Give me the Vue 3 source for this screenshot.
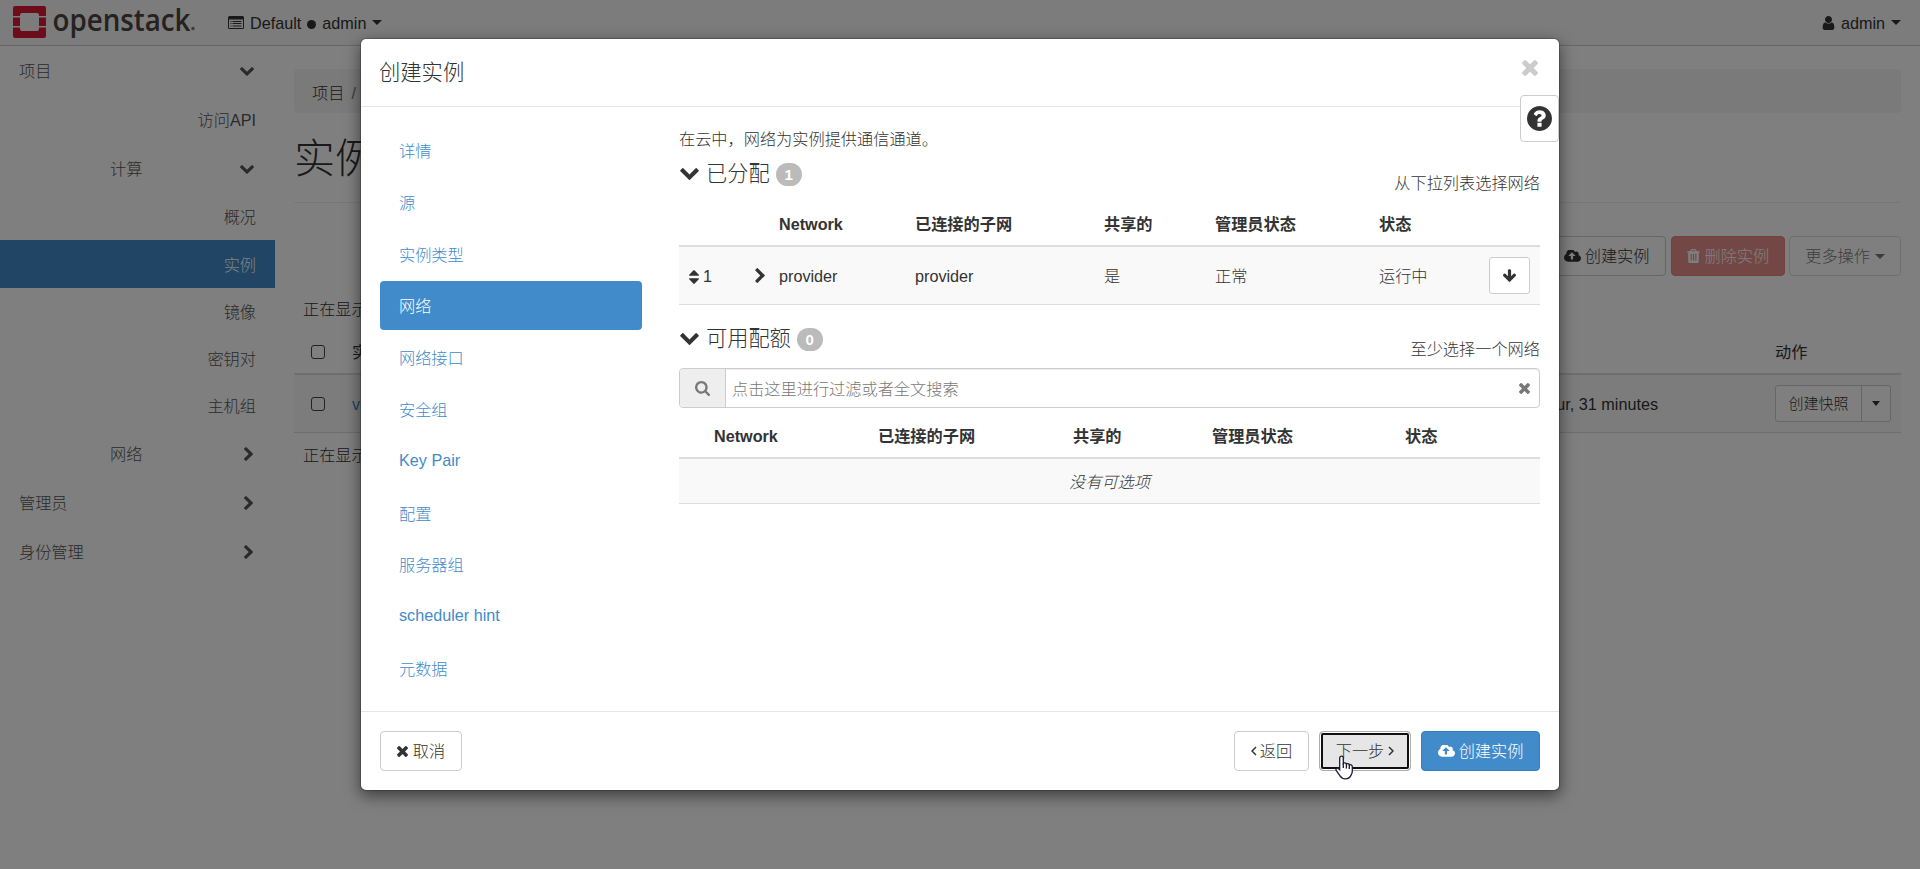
<template>
  <div class="page">
    <header class="navbar">
      <svg class="logo" viewBox="0 0 190 34">
        <g fill="#da1a32">
          <path d="M2 0h29a2 2 0 0 1 2 2v8h-7V9a2 2 0 0 0-2-2H9a2 2 0 0 0-2 2v1H0V2a2 2 0 0 1 2-2z" />
          <path d="M0 21.500h7V23a2 2 0 0 0 2 2h15a2 2 0 0 0 2-2v-1.500h7V30a2 2 0 0 1-2 2H2a2 2 0 0 1-2-2z" />
          <path d="M0 11.500h7v8.500H0zM26 11.500h7v8.500h-7z" />
        </g>
        <text x="39.500" y="24.800" textLength="138" lengthAdjust="spacingAndGlyphs">openstack</text>
        <circle cx="180" cy="22.500" r="1.700" />
      </svg>
      <div class="context">
        <svg class="list-alt" viewBox="0 0 16 13">
          <path fill-rule="evenodd" d="M1.500 0h13A1.500 1.500 0 0 1 16 1.500v10a1.500 1.500 0 0 1-1.500 1.500h-13A1.500 1.500 0 0 1 0 11.500v-10A1.500 1.500 0 0 1 1.500 0zM1 3.500V12h14V3.500z" />
          <path d="M2.500 5h1v1h-1zM2.500 7h1v1h-1zM2.500 9.500h1v1h-1zM4.500 5h9v1h-9zM4.500 7h9v1h-9zM4.500 9.500h9v1h-9z" />
        </svg>
        <span>Default</span>
        <i class="dot"></i>
        <span>admin</span>
        <i class="caret"></i>
      </div>
      <div class="user">
        <Icon name="user" class="ic-user" />
        <span>admin</span>
        <i class="caret"></i>
      </div>
    </header>

    <div class="body">
      <nav class="sidebar">
        <div v-for="item in menu" :key="item.text" class="side-item" :class="[item.kind, { active: item.active }]">
          <span>{{ item.text }}</span>
          <Icon v-if="item.icon" :name="item.icon" :class="item.icon" />
        </div>
      </nav>

      <main class="content">
        <div class="breadcrumb"><span>项目</span><em>/</em><span>计算</span><em>/</em><span>实例</span></div>
        <h1>实例</h1>
        <div class="toolbar">
          <button class="btn"><Icon name="cloud" class="ic-cloud" />创建实例</button>
          <button class="btn danger"><Icon name="trash" class="ic-trash" />删除实例</button>
          <button class="btn faded">更多操作<i class="caret"></i></button>
        </div>
        <p class="count">正在显示 1 项</p>
        <div class="grid head">
          <i class="checkbox"></i>
          <b>实例名称</b>
          <b class="age"></b>
          <b>动作</b>
        </div>
        <div class="grid row">
          <i class="checkbox"></i>
          <a>vm1</a>
          <span class="age">1 hour, 31 minutes</span>
          <div class="split"><button>创建快照</button><button><i class="caret"></i></button></div>
        </div>
        <p class="count bottom">正在显示 1 项</p>
      </main>
    </div>

    <div class="backdrop"></div>

    <div class="modal">
      <div class="modal-header">
        <h3>创建实例</h3>
        <Icon name="times" class="close" />
      </div>
      <button class="help"><Icon name="question" class="ic-question" /></button>

      <div class="modal-body">
        <ul class="steps">
          <li v-for="step in steps" :key="step" :class="{ active: step === current, latin: /^[a-z]/i.test(step) }">{{ step }}</li>
        </ul>

        <section class="panel">
          <p class="intro">在云中，网络为实例提供通信通道。</p>

          <div class="section-title">
            <Icon name="down" class="ic-down" />
            <span class="name">已分配</span>
            <span class="badge">1</span>
            <span class="hint">从下拉列表选择网络</span>
          </div>
          <table class="allocated">
            <colgroup>
              <col v-for="(w, i) in allocatedCols" :key="i" :width="w">
            </colgroup>
            <thead>
              <tr>
                <th></th>
                <th></th>
                <th v-for="h in headers" :key="h">{{ h }}</th>
                <th></th>
              </tr>
            </thead>
            <tbody>
              <tr>
                <td><Icon name="sort" class="ic-sort" />1</td>
                <td><Icon name="right" class="ic-right" /></td>
                <td>provider</td>
                <td>provider</td>
                <td>是</td>
                <td>正常</td>
                <td>运行中</td>
                <td class="action"><button class="btn small"><Icon name="arrow" class="ic-arrow" /></button></td>
              </tr>
            </tbody>
          </table>

          <div class="section-title second">
            <Icon name="down" class="ic-down" />
            <span class="name">可用配额</span>
            <span class="badge">0</span>
            <span class="hint">至少选择一个网络</span>
          </div>
          <div class="search">
            <span class="addon"><Icon name="search" class="ic-search" /></span>
            <span class="placeholder">点击这里进行过滤或者全文搜索</span>
            <Icon name="times" class="clear" />
          </div>
          <table class="available">
            <colgroup>
              <col v-for="(w, i) in availableCols" :key="i" :width="w">
            </colgroup>
            <thead>
              <tr>
                <th></th>
                <th v-for="h in headers" :key="h">{{ h }}</th>
              </tr>
            </thead>
            <tbody>
              <tr>
                <td colspan="6" class="empty">没有可选项</td>
              </tr>
            </tbody>
          </table>
        </section>
      </div>

      <div class="modal-footer">
        <button class="btn cancel"><Icon name="times" class="ic-times" />取消</button>
        <button class="btn back">
          <svg class="angle" viewBox="0 0 6 10"><path d="M5 1L1 5l4 4" /></svg>返回
        </button>
        <button class="btn next">
          下一步<svg class="angle" viewBox="0 0 6 10"><path d="M1 1l4 4-4 4" /></svg>
        </button>
        <button class="btn primary"><Icon name="cloud" class="ic-cloud" />创建实例</button>
      </div>
    </div>

    <svg class="pointer" viewBox="0 0 20 25">
      <path d="M6.500 1.200c1.100 0 1.800.8 1.800 1.800v5.200c.4-.5 2.700-.6 3.100.8.700-.6 2.600-.4 2.900.9.900-.5 3-.2 3 1.800v4.600c0 1.900-.9 3.200-1.500 4.300-.9 1.900-2.700 3.200-5.300 3.200-2.700 0-4.200-1-5.500-3L1.200 15.400c-.8-1.400.9-2.900 2.200-1.900l1.300 1.200V3c0-1 .8-1.800 1.800-1.800z" />
      <path d="M8.300 8v5M11.400 9v4.500M14.300 10v4" />
    </svg>
  </div>
</template>

<script setup>
import { h } from 'vue'

// name: [viewBox, path]
const icons = {
  down: ['90 533 1612 1035', 'M1683 808l-742 741q-19 19-45 19t-45-19l-742-741q-19-19-19-45.5t19-45.5l166-165q19-19 45-19t45 19l531 531 531-531q19-19 45-19t45 19l166 165q19 19 19 45.5t-19 45.5z'],
  right: ['346 26 1036 1612', 'M1363 877l-742 742q-19 19-45 19t-45-19l-166-166q-19-19-19-45t19-45l531-531-531-531q-19-19-19-45t19-45l166-166q19-19 45-19t45 19l742 742q19 19 19 45t-19 45z'],
  times: ['302 366 1188 1188', 'M1490 1322q0 40-28 68l-136 136q-28 28-68 28t-68-28l-294-294-294 294q-28 28-68 28t-68-28l-136-136q-28-28-28-68t28-68l294-294-294-294q-28-28-28-68t28-68l136-136q28-28 68-28t68 28l294 294 294-294q28-28 68-28t68 28l136 136q28 28 28 68t-28 68l-294 294 294 294q28 28 28 68z'],
  question: ['128 128 1536 1536', 'M1024 1376v-192q0-14-9-23t-23-9h-192q-14 0-23 9t-9 23v192q0 14 9 23t23 9h192q14 0 23-9t9-23zm256-672q0-88-55.5-163t-138.500-116-170-41q-243 0-371 213-15 24 8 42l132 100q7 6 19 6 16 0 25-12 53-68 86-92 34-24 86-24 48 0 85.500 26t37.500 59q0 38-20 61t-68 45q-63 28-115.500 86.500t-52.500 125.500v36q0 14 9 23t23 9h192q14 0 23-9t9-23q0-19 21.500-49.500t54.500-49.500q32-18 49-28.500t46-35 44.500-48 28-60.500 12.500-81zm384 192q0 209-103 385.500t-279.500 279.500-385.500 103-385.500-103-279.500-279.500-103-385.500 103-385.500 279.500-279.500 385.500-103 385.500 103 279.500 279.500 103 385.500z'],
  search: ['64 128 1664 1664', 'M1216 832q0-185-131.500-316.500t-316.500-131.500-316.500 131.500-131.500 316.500 131.500 316.500 316.500 131.500 316.500-131.500 131.500-316.500zm512 832q0 52-38 90t-90 38q-54 0-90-38l-343-342q-179 124-399 124-143 0-273.500-55.500t-225-150-150-225-55.500-273.500 55.500-273.500 150-225 225-150 273.500-55.500 273.500 55.500 225 150 150 225 55.500 273.500q0 220-124 399l343 343q37 37 37 90z'],
  cloud: ['0 256 1920 1280', 'M1280 864q0-14-9-23l-352-352q-9-9-23-9t-23 9l-351 351q-10 12-10 24 0 14 9 23t23 9h224v352q0 13 9.500 22.500t22.500 9.500h192q13 0 22.500-9.500t9.500-22.500v-352h224q13 0 22.500-9.500t9.500-22.500zm640 288q0 159-112.500 271.500t-271.500 112.500h-1088q-185 0-316.500-131.500t-131.500-316.500q0-130 70-240t188-165q-2-30-2-43 0-212 150-362t362-150q156 0 285.500 87t188.500 231q71-62 166-62 106 0 181 75t75 181q0 76-41 138 130 31 213.500 135.500t83.500 238.500z'],
  user: ['256 128 1280 1536', 'M1536 1399q0 109-62.500 187t-150.500 78h-854q-88 0-150.500-78t-62.500-187q0-85 8.500-160.500t31.500-152 58.500-131 94-89 134.500-34.500q131 128 313 128t313-128q76 0 134.500 34.500t94 89 58.500 131 31.500 152 8.500 160.500zm-256-887q0 159-112.500 271.500t-271.500 112.500-271.500-112.500-112.500-271.500 112.500-271.500 271.500-112.500 271.500 112.500 112.500 271.500z'],
  arrow: ['117 128 1558 1483', 'M1675 832q0 53-37 90l-651 652q-39 37-91 37-53 0-90-37l-651-652q-38-36-38-90 0-53 38-91l74-75q39-37 91-37 53 0 90 37l294 294v-704q0-52 38-90t90-38h128q52 0 90 38t38 90v704l294-294q37-37 90-37 52 0 91 37l75 75q37 39 37 91z'],
  sort: ['384 192 1024 1408', 'M1408 1088q0 26-19 45l-448 448q-19 19-45 19t-45-19l-448-448q-19-19-19-45t19-45 45-19h896q26 0 45 19t19 45zm0-384q0 26-19 45t-45 19h-896q-26 0-45-19t-19-45 19-45l448-448q19-19 45-19t45 19l448 448q19 19 19 45z'],
  trash: ['192 128 1408 1536', 'M704 1376v-704q0-14-9-23t-23-9h-64q-14 0-23 9t-9 23v704q0 14 9 23t23 9h64q14 0 23-9t9-23zm256 0v-704q0-14-9-23t-23-9h-64q-14 0-23 9t-9 23v704q0 14 9 23t23 9h64q14 0 23-9t9-23zm256 0v-704q0-14-9-23t-23-9h-64q-14 0-23 9t-9 23v704q0 14 9 23t23 9h64q14 0 23-9t9-23zm-544-992h448l-48-117q-7-9-17-11h-317q-10 2-17 11zm928 32v64q0 14-9 23t-23 9h-96v948q0 83-47 143.500t-113 60.500h-832q-66 0-113-58.500t-47-141.500v-952h-96q-14 0-23-9t-9-23v-64q0-14 9-23t23-9h309l70-167q15-37 54-63t79-26h320q40 0 79 26t54 63l70 167h309q14 0 23 9t9 23z']
}

const Icon = (props) => h('svg', { viewBox: icons[props.name][0], fill: 'currentColor' }, [h('path', { d: icons[props.name][1] })])
Icon.props = ['name']

const menu = [
  { text: '项目', kind: 'top', icon: 'down' },
  { text: '访问API', kind: 'api' },
  { text: '计算', kind: 'group', icon: 'down' },
  { text: '概况', kind: 'leaf' },
  { text: '实例', kind: 'leaf', active: true },
  { text: '镜像', kind: 'leaf' },
  { text: '密钥对', kind: 'leaf' },
  { text: '主机组', kind: 'leaf' },
  { text: '网络', kind: 'group', icon: 'right' },
  { text: '管理员', kind: 'top', icon: 'right' },
  { text: '身份管理', kind: 'top', icon: 'right' }
]

const steps = ['详情', '源', '实例类型', '网络', '网络接口', '安全组', 'Key Pair', '配置', '服务器组', 'scheduler hint', '元数据']
const current = '网络'

const headers = ['Network', '已连接的子网', '共享的', '管理员状态', '状态']
const allocatedCols = [66, 24, 136, 189, 111, 164, 110, 61]
const availableCols = [25, 164, 195, 139, 193, 145]
</script>

<style>
body {
  background: #fff;
  overflow: hidden;
}
</style>

<style scoped>
.page {
  position: relative;
  height: 869px;
  overflow: hidden;
  font-family: "Liberation Sans", "Noto Sans CJK SC", sans-serif;
  font-size: 16.2px;
  font-weight: 300;
  line-height: 22px;
  color: #333;
}

.page * {
  box-sizing: border-box;
}

svg {
  display: block;
  flex: none;
}

button {
  font: inherit;
  color: inherit;
  margin: 0;
}

p,
h1,
h3,
ul {
  margin: 0;
  padding: 0;
  font-weight: 300;
}

.caret {
  border-top: 5px solid currentColor;
  border-left: 5px solid transparent;
  border-right: 5px solid transparent;
}

/* top bar */
.navbar {
  display: flex;
  align-items: center;
  height: 46px;
  padding: 0 19px 0 13px;
  background: #f8f8f8;
  border-bottom: 1px solid #ccc;
}

.logo {
  width: 190px;
  height: 34px;
  margin-top: 1px;
  overflow: visible;
}

.logo text {
  font-family: "Open Sans", sans-serif;
  font-size: 30px;
  font-weight: 600;
  fill: #4a4440;
}

.logo circle {
  fill: #777;
}

.context,
.user {
  display: flex;
  align-items: center;
}

.context {
  margin-left: 25px;
}

.list-alt {
  width: 16px;
  height: 13px;
  margin-right: 6px;
  fill: #333;
}

.dot {
  width: 9px;
  height: 9px;
  margin: 3px 6px 0 6px;
  border-radius: 50%;
  background: #333;
}

.navbar .caret {
  margin-left: 6px;
}

.user {
  margin-left: auto;
}

.ic-user {
  width: 13px;
  height: 14px;
  margin-right: 6px;
}

/* left menu */
.body {
  display: flex;
}

.sidebar {
  width: 275px;
  color: #555;
}

.side-item {
  display: flex;
  align-items: center;
  justify-content: space-between;
  height: 49px;
  padding: 1px 21px 0 19px;
}

.group {
  padding-left: 110px;
}

.api,
.leaf {
  justify-content: flex-end;
  padding-right: 19px;
}

.leaf {
  height: 47px;
}

.leaf.active {
  height: 48px;
  background: #428bca;
  color: #fff;
}

.down {
  width: 14px;
  height: 9px;
}

.right {
  width: 9px;
  height: 14px;
  margin-right: 1px;
}

/* page behind the dialog */
.content {
  flex: 1;
  padding: 23px 19px 0 19px;
}

.breadcrumb {
  display: flex;
  align-items: center;
  gap: 7px;
  height: 44px;
  padding: 3px 18px 0;
  background: #f5f5f5;
  border-radius: 4px;
}

.breadcrumb em {
  font-style: normal;
  color: #777;
}

h1 {
  height: 90px;
  padding-top: 23px;
  font-size: 41px;
  line-height: 46px;
  border-bottom: 1px solid #eee;
}

.toolbar {
  display: flex;
  justify-content: flex-end;
  gap: 4px;
  margin-top: 33px;
}

.btn {
  display: flex;
  align-items: center;
  justify-content: center;
  height: 40px;
  padding: 0 15px;
  border: 1px solid #ccc;
  border-radius: 4px;
  background: #fff;
  white-space: nowrap;
}

.toolbar .btn:first-child {
  margin-right: 1px;
}

.ic-cloud {
  width: 17px;
  height: 12px;
  margin-right: 4px;
}

.ic-trash {
  width: 13px;
  height: 14px;
  margin-right: 5px;
}

.danger {
  background: #d9534f;
  border-color: #d43f3a;
  color: #fff;
  opacity: 0.65;
}

.faded {
  opacity: 0.65;
}

.faded .caret {
  margin-left: 5px;
}

.count {
  margin-top: 22px;
  padding-left: 9px;
}

.grid {
  display: grid;
  grid-template-columns: 41px 1000px 1fr 126px;
  align-items: center;
  padding-left: 17px;
}

.head {
  height: 55px;
  padding-top: 11px;
  border-bottom: 2px solid #ddd;
}

.row {
  height: 58px;
  background: #f9f9f9;
  border-bottom: 1px solid #ddd;
}

.row a {
  color: #428bca;
}

.age {
  padding-right: 117px;
  text-align: right;
}

.checkbox {
  width: 14px;
  height: 14px;
  border: 1px solid #444;
  border-radius: 3px;
}

.split {
  display: flex;
  height: 37px;
  width: 116px;
  font-size: 15px;
}

.split button {
  display: flex;
  align-items: center;
  justify-content: center;
  width: 87px;
  padding: 0;
  border: 1px solid #ccc;
  border-radius: 3px 0 0 3px;
  background: #fff;
}

.split button + button {
  width: 30px;
  margin-left: -1px;
  border-radius: 0 3px 3px 0;
}

.split .caret {
  border-width: 5px 4.5px 0;
}

.count.bottom {
  margin-top: 11px;
}

/* dialog */
.backdrop {
  position: absolute;
  inset: 0;
  background: rgba(0, 0, 0, 0.5);
}

.modal {
  position: absolute;
  top: 38px;
  left: 360px;
  width: 1200px;
  height: 753px;
  display: flex;
  flex-direction: column;
  background: #fff;
  background-clip: padding-box;
  border: 1px solid rgba(0, 0, 0, 0.2);
  border-radius: 6px;
  box-shadow: 0 5px 15px rgba(0, 0, 0, 0.5);
}

.modal-header {
  display: flex;
  align-items: center;
  justify-content: space-between;
  height: 68px;
  padding: 0 21px 0 18px;
  border-bottom: 1px solid #e5e5e5;
}

h3 {
  font-size: 21.3px;
  line-height: 28px;
}

.close {
  width: 16px;
  height: 16px;
  margin-bottom: 9px;
  color: #ccc;
}

.help {
  position: absolute;
  top: 56px;
  right: 0;
  display: flex;
  align-items: center;
  justify-content: center;
  width: 39px;
  height: 47px;
  padding: 0;
  border: 1px solid #ccc;
  border-radius: 4px;
  background: #fff;
}

.ic-question {
  width: 25px;
  height: 25px;
}

.modal-body {
  flex: 1;
  display: flex;
  padding: 19px 19px 0 19px;
}

.steps {
  width: 262px;
  margin-right: 37px;
  list-style: none;
}

.steps li {
  height: 49px;
  margin-bottom: 2.8px;
  padding: 0 19px;
  line-height: 50px;
  border-radius: 4px;
  color: #428bca;
}

.steps .latin {
  line-height: 47px;
}

.steps .active {
  background: #428bca;
  color: #fff;
}

.panel {
  flex: 1;
}

.intro {
  padding-top: 2px;
}

.section-title {
  display: flex;
  align-items: center;
  height: 36px;
  margin-top: 6px;
}

.ic-down {
  width: 19px;
  height: 12px;
  margin: 0 7px 0 1px;
}

.name {
  font-size: 21.2px;
  line-height: 24px;
}

.badge {
  width: 26px;
  height: 23px;
  margin-left: 6px;
  border-radius: 12px;
  background: #bbb;
  color: #fff;
  font-size: 15px;
  font-weight: 700;
  line-height: 23px;
  text-align: center;
}

.hint {
  margin-left: auto;
  padding-top: 18px;
}

table {
  width: 861px;
  table-layout: fixed;
  border-collapse: separate;
  border-spacing: 0;
}

th,
td {
  padding: 0 0 0 10px;
  text-align: left;
  white-space: nowrap;
}

th {
  font-weight: 700;
  height: 55px;
  padding-top: 11px;
  border-bottom: 2px solid #ddd;
}

td {
  height: 58px;
  background: #f9f9f9;
  border-bottom: 1px solid #ddd;
}

.ic-sort {
  display: inline-block;
  width: 10px;
  height: 14px;
  margin-right: 4px;
  vertical-align: -2px;
}

.ic-right {
  width: 10px;
  height: 15px;
}

.small {
  width: 41px;
  height: 37px;
  padding: 0;
  border-radius: 3px;
}

.ic-arrow {
  width: 13px;
  height: 13px;
}

.second {
  margin-top: 16px;
}

.second .hint {
  padding-top: 20px;
}

.search {
  display: flex;
  align-items: center;
  height: 40px;
  margin-top: 11px;
  border: 1px solid #ccc;
  border-radius: 4px;
  box-shadow: inset 0 1px 1px rgba(0, 0, 0, 0.075);
  color: #777;
}

.addon {
  display: flex;
  align-items: center;
  justify-content: center;
  width: 46px;
  height: 38px;
  border-right: 1px solid #ccc;
  border-radius: 3px 0 0 3px;
  background: #eee;
}

.ic-search {
  width: 15px;
  height: 15px;
}

.placeholder {
  margin-left: 6px;
  padding-top: 2px;
}

.clear {
  width: 11px;
  height: 11px;
  margin: 0 9px 0 auto;
}

.available th {
  height: 51px;
  padding-top: 6px;
}

.available .empty {
  height: 45px;
  padding: 1px 0 0;
  text-align: center;
  font-style: italic;
}

.modal-footer {
  display: flex;
  height: 79px;
  padding: 19px;
  border-top: 1px solid #e5e5e5;
}

.cancel {
  width: 82px;
  margin-right: auto;
}

.ic-times {
  width: 11px;
  height: 11px;
  margin-right: 5px;
}

.angle {
  width: 6px;
  height: 10px;
  fill: none;
  stroke: #333;
  stroke-width: 1.5;
}

.back {
  width: 75px;
  margin-right: 10px;
}

.back .angle {
  margin-right: 3px;
}

.next {
  width: 92px;
  margin-right: 10px;
  background: #e6e6e6;
  border-color: #adadad;
  box-shadow: inset 0 0 0 1px #fff, inset 0 0 0 3px #101010;
}

.next .angle {
  margin-left: 4px;
}

.primary {
  width: 119px;
  background: #428bca;
  border-color: #357ebd;
  color: #fff;
}

.pointer {
  position: absolute;
  top: 755px;
  left: 1335px;
  width: 20px;
  height: 25px;
  fill: #fff;
  stroke: #1b1b2f;
  stroke-width: 1.3;
}
</style>
